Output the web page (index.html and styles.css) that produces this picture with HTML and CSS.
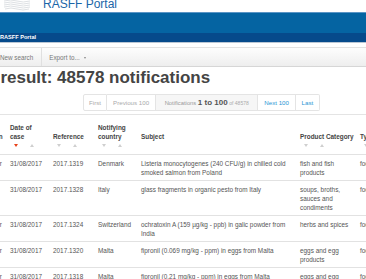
FILE: index.html
```html
<!DOCTYPE html>
<html lang="en">
<head>
    <meta charset="UTF-8">
    <meta name="viewport" content="width=device-width, initial-scale=1.0">
    <title>RASFF Portal - Search result</title>
    <link rel="stylesheet" href="styles.css">
</head>
<body>
    <header class="site-header">
        <svg class="logo" width="28" height="12" viewBox="0 0 28 12">
            <g fill="none" stroke="#d4d8dc" stroke-width="0.8">
                <path d="M1 1 Q8 -1 14 1 T27 1"/>
                <path d="M1 3 Q8 1 14 3 T27 3"/>
                <path d="M1 5 Q8 3 14 5 T27 5"/>
                <path d="M1 7 Q8 5 14 7 T27 7"/>
                <path d="M2 9 Q8 7 14 9 T26 9"/>
            </g>
        </svg>
        <span class="site-title">RASFF Portal</span>
    </header>
    <div class="band"></div>
    <div class="crumbs">RASFF Portal</div>

    <div class="toolbar">
        <span class="tool">New search</span>
        <span class="tool-sep"></span>
        <span class="tool">Export to... <span class="caret"></span></span>
    </div>

    <h1 class="result-title">Search result: 48578 notifications</h1>

    <div class="pager">
        <span class="page-btn disabled">First</span>
        <span class="page-btn disabled">Previous 100</span>
        <span class="page-btn info">Notifications <b>1 to 100</b> <small>of 48578</small></span>
        <span class="page-btn link">Next 100</span>
        <span class="page-btn link last">Last</span>
    </div>

    <table class="results">
        <colgroup>
            <col class="c-class">
            <col class="c-date">
            <col class="c-ref">
            <col class="c-country">
            <col class="c-subject">
            <col class="c-product">
            <col class="c-type">
        </colgroup>
        <thead>
            <tr>
                <th class="first">Classification<div class="sort"><span class="down"></span><span class="up"></span></div></th>
                <th>Date of case<div class="sort"><span class="down active"></span><span class="up"></span></div></th>
                <th>Reference<div class="sort"><span class="down"></span><span class="up"></span></div></th>
                <th>Notifying country<div class="sort"><span class="down"></span><span class="up"></span></div></th>
                <th>Subject<div class="sort"></div></th>
                <th class="nowrap">Product Category<div class="sort"><span class="down"></span><span class="up"></span></div></th>
                <th>Type<div class="sort"><span class="down"></span><span class="up"></span></div></th>
            </tr>
        </thead>
        <tbody>
            <tr>
                <td class="first">information for attention</td>
                <td>31/08/2017</td>
                <td>2017.1319</td>
                <td>Denmark</td>
                <td>Listeria monocytogenes (240 CFU/g) in chilled cold smoked salmon from Poland</td>
                <td>fish and fish products</td>
                <td>food</td>
            </tr>
            <tr>
                <td class="first">alert</td>
                <td>31/08/2017</td>
                <td>2017.1328</td>
                <td>Italy</td>
                <td>glass fragments in organic pesto from Italy</td>
                <td>soups, broths, sauces and condiments</td>
                <td>food</td>
            </tr>
            <tr>
                <td class="first">information for follow-up</td>
                <td>31/08/2017</td>
                <td>2017.1324</td>
                <td>Switzerland</td>
                <td>ochratoxin A (159 µg/kg - ppb) in galic powder from India</td>
                <td>herbs and spices</td>
                <td>food</td>
            </tr>
            <tr>
                <td class="first">information for attention</td>
                <td>31/08/2017</td>
                <td>2017.1320</td>
                <td>Malta</td>
                <td>fipronil (0.069 mg/kg - ppm) in eggs from Malta</td>
                <td>eggs and egg products</td>
                <td>food</td>
            </tr>
            <tr>
                <td class="first">information for attention</td>
                <td>31/08/2017</td>
                <td>2017.1318</td>
                <td>Malta</td>
                <td>fipronil (0.21 mg/kg - ppm) in eggs from Malta</td>
                <td>eggs and egg products</td>
                <td>food</td>
            </tr>
        </tbody>
    </table>
</body>
</html>
```

FILE: styles.css
```css
body {
    font-family: "Liberation Sans", Arial, sans-serif;
    background-color: #fff;
    color: #555;
    margin: 0;
    overflow: hidden;
}

/* Top header */
.site-header {
    height: 12px;
    display: flex;
    align-items: flex-start;
    overflow: hidden;
}
.logo {
    margin-left: 3px;
}
.site-title {
    margin-left: 12px;
    margin-top: -3px;
    font-size: 12px;
    line-height: 14px;
    color: #1a66a8;
}
.band {
    height: 20px;
    background-color: #0564a2;
    border-top: 1px solid #5b95c6;
}
.crumbs {
    height: 9px;
    line-height: 9px;
    background-color: #064a8b;
    color: #fff;
    font-size: 5.6px;
    font-weight: bold;
    border-bottom: 1px solid #b9c6d4;
}

/* Toolbar */
.toolbar {
    margin-top: 4px;
    height: 18px;
    display: flex;
    align-items: center;
    background: linear-gradient(#fdfdfd, #eeeeee);
    border-top: 1px solid #e2e2e2;
    border-bottom: 1px solid #d6d6d6;
    font-size: 6.3px;
    color: #777;
}
.tool-sep {
    width: 1px;
    height: 18px;
    background-color: #e0e0e0;
    margin: 0 7px 0 8px;
}
.caret {
    display: inline-block;
    margin-left: 3px;
    border-left: 1.5px solid transparent;
    border-right: 1.5px solid transparent;
    border-top: 2px solid #888;
    vertical-align: middle;
}

/* Title */
.result-title {
    margin: 1px 0 0 -61px;
    font-size: 17px;
    line-height: 20px;
    color: #444;
    white-space: nowrap;
}

/* Pagination */
.pager {
    display: flex;
    margin-top: 6px;
    padding: 0 0 3px 83px;
    border-bottom: 1px solid #e4e4e4;
}
.page-btn {
    height: 15px;
    line-height: 15px;
    padding: 0 6px;
    font-size: 6.2px;
    border: 1px solid #e4e4e4;
    border-left: none;
    background-color: #fff;
    white-space: nowrap;
}
.page-btn:first-child {
    border-left: 1px solid #e4e4e4;
    padding: 0 5px;
    border-radius: 2px 0 0 2px;
}
.page-btn.disabled {
    color: #aaa;
}
.page-btn.info {
    padding: 0 8.5px;
    color: #999;
    background-color: #f6f6f6;
    font-size: 5.8px;
}
.page-btn.info b {
    font-size: 8px;
    color: #555;
}
.page-btn.info small {
    font-size: 5px;
    color: #aaa;
}
.page-btn.link {
    color: #2a96d4;
}
.page-btn.last {
    padding: 0 5.5px;
    border-radius: 0 2px 2px 0;
}

/* Results table */
.results {
    margin-left: -44px;
    table-layout: fixed;
    border-collapse: collapse;
    width: 460px;
    font-size: 6.4px;
    line-height: 9px;
}
.c-class { width: 50px; }
.c-date { width: 43px; }
.c-ref { width: 45px; }
.c-country { width: 43px; }
.c-subject { width: 159px; }
.c-product { width: 60px; }
.c-type { width: 60px; }

.results th {
    padding: 8px 4px 4px;
    text-align: left;
    vertical-align: bottom;
    font-weight: bold;
    color: #444;
}
.results th.nowrap {
    white-space: nowrap;
}
.results td {
    padding: 3.5px 4px;
    vertical-align: top;
    border-top: 1px solid #e2e2e2;
}
.results .first {
    padding-left: 5px;
    padding-right: 3px;
}
.sort {
    height: 9px;
    display: flex;
    align-items: center;
}
.sort span {
    width: 0;
    height: 0;
    border-left: 2.5px solid transparent;
    border-right: 2.5px solid transparent;
}
.sort .down {
    margin-left: 4px;
    border-top: 3px solid #cfcfcf;
}
.sort .down.active {
    border-top-color: #e8421a;
}
.sort .up {
    margin-left: 12px;
    border-bottom: 3px solid #cfcfcf;
}
```
